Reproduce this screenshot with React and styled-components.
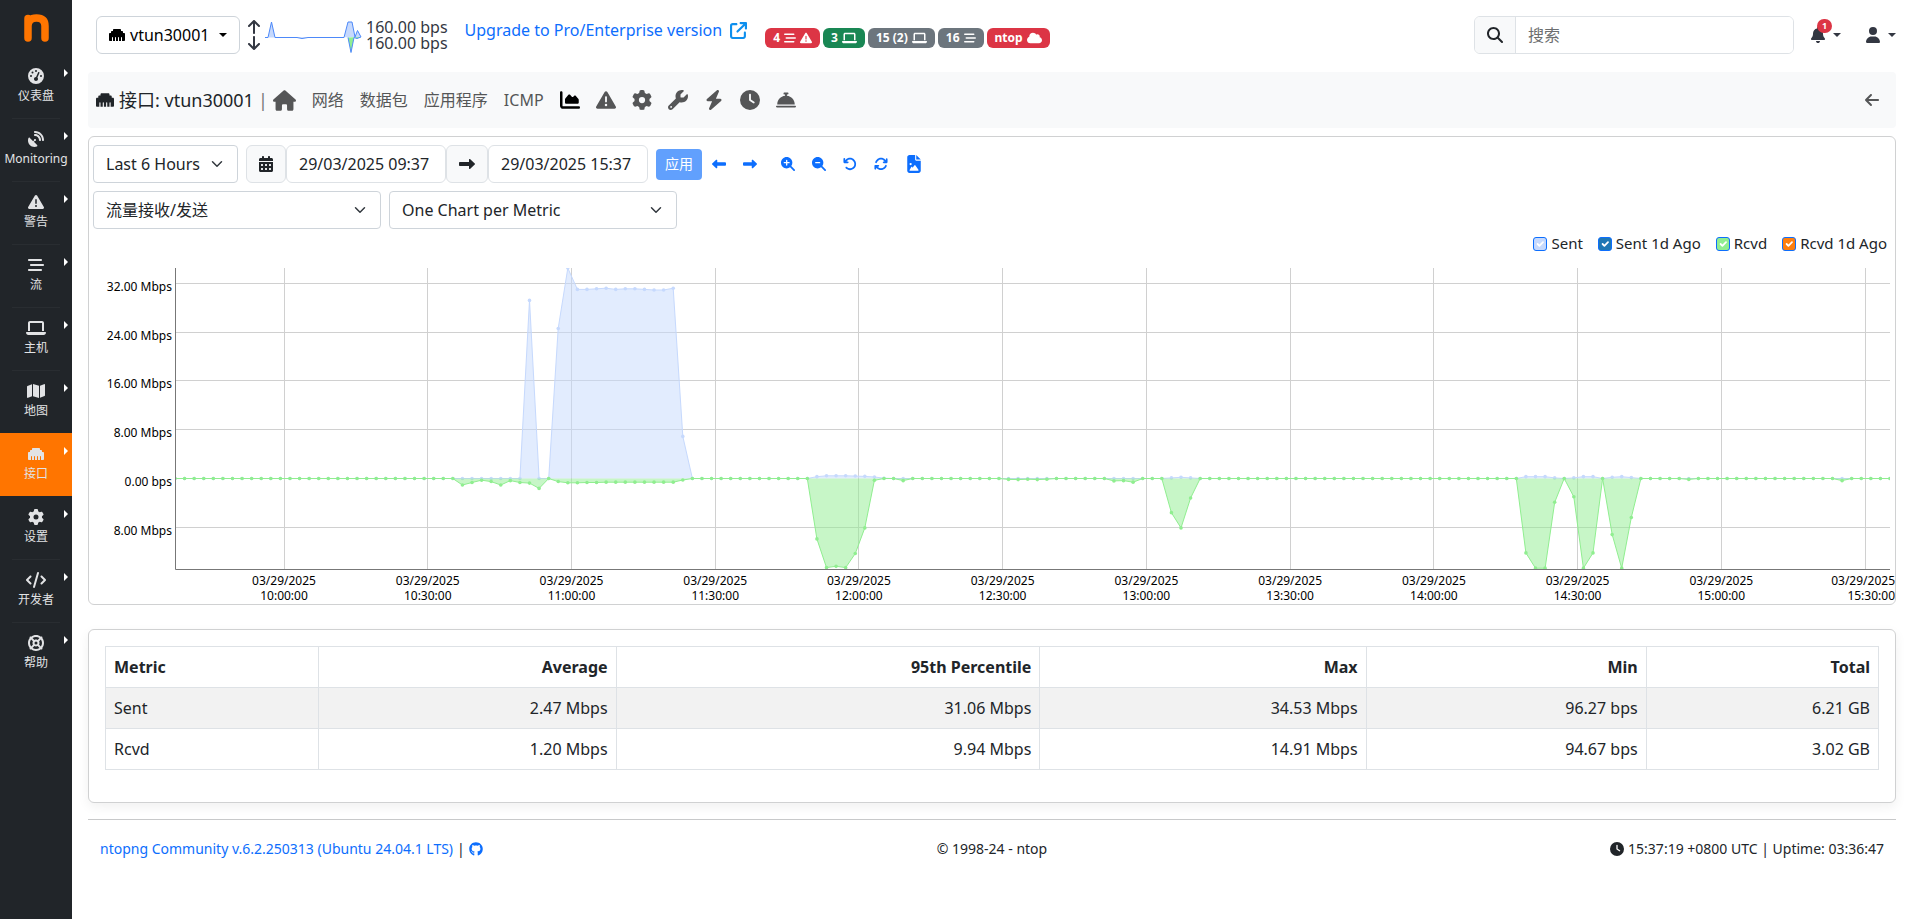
import React, { Fragment } from 'react';
import styled, { createGlobalStyle, css } from 'styled-components';
import {
  FaArrowDown,
  FaArrowLeft,
  FaArrowRotateLeft,
  FaArrowsRotate,
  FaArrowUp,
  FaArrowUpRightFromSquare,
  FaBarsStaggered,
  FaBell,
  FaBellConcierge,
  FaBolt,
  FaCalendarDays,
  FaChartArea,
  FaClock,
  FaCloud,
  FaCode,
  FaEthernet,
  FaFileImage,
  FaGaugeHigh,
  FaGear,
  FaGithub,
  FaHouse,
  FaLaptop,
  FaLeftLong,
  FaLifeRing,
  FaMagnifyingGlass,
  FaMagnifyingGlassMinus,
  FaMagnifyingGlassPlus,
  FaMap,
  FaRightLong,
  FaSatelliteDish,
  FaTriangleExclamation,
  FaUser,
  FaWrench
} from 'react-icons/fa6';

const colors = {
  primary: '#0d6efd',
  danger: '#dc3545',
  success: '#198754',
  secondary: '#6c757d',
  dark: '#212529',
  light: '#f8f9fa',
  border: '#dee2e6',
  orange: '#ff7500',
  sent: '#c6d9fd',
  rcvd: '#90ee90'
};

const GlobalStyle = createGlobalStyle`
  *, *::before, *::after {
    box-sizing: border-box;
  }
  body {
    margin: 0;
    background: white;
    color: ${colors.dark};
    font-family: 'Noto Sans', 'Noto Sans CJK SC', sans-serif;
    font-size: 16px;
    line-height: 24px;
  }
  a {
    color: ${colors.primary};
    text-decoration: none;
  }
  button, input, select {
    font: inherit;
    color: inherit;
  }
  svg {
    flex: none;
  }
`;

const Layout = styled.div`
  display: flex;
  min-height: 100vh;
`;

/* sidebar */

const Sidebar = styled.nav`
  flex: none;
  width: 72px;
  background: ${colors.dark};
`;

const Logo = styled.a`
  display: flex;
  justify-content: center;
  height: 55px;
  padding-top: 14px;
`;

const Menu = styled.ul`
  margin: 0;
  padding: 0;
  list-style: none;
`;

const MenuItem = styled.li`
  position: relative;
  height: 63px;
  background: ${props => (props.$active ? colors.orange : 'transparent')};

  & + &::before {
    content: '';
    position: absolute;
    top: 0;
    left: 12px;
    right: 12px;
    border-top: 1px solid rgba(255, 255, 255, 0.04);
  }
  &::after {
    content: '';
    position: absolute;
    top: 14px;
    right: 4px;
    border: 4px solid transparent;
    border-left-color: white;
    border-right: 0;
  }
`;

const MenuLink = styled.a`
  display: flex;
  flex-direction: column;
  align-items: center;
  gap: 4px;
  padding-top: 13px;
  color: #e2e3e5;
  font-size: 12px;
  line-height: 16px;
  white-space: nowrap;

  svg {
    height: 16px;
  }
`;

/* top bar */

const Main = styled.div`
  flex: 1;
  min-width: 0;
  padding: 0 24px 0 16px;
`;

const TopBar = styled.header`
  display: flex;
  align-items: flex-start;
  height: 72px;
  padding: 16px 0 0 8px;
`;

const Caret = styled.span`
  border: 4px solid transparent;
  border-top-color: currentColor;
  border-bottom: 0;
`;

const InterfaceButton = styled.button`
  display: flex;
  align-items: center;
  gap: 5px;
  height: 38px;
  width: 144px;
  padding: 0 12px;
  color: black;
  background: white;
  border: 1px solid #ced4da;
  border-radius: 6px;

  ${Caret} {
    margin-left: auto;
  }
`;

const Traffic = styled.div`
  display: flex;
  align-items: center;
  height: 38px;
  margin-left: 6px;
  color: #333742;
`;

const Directions = styled.div`
  display: flex;
  flex-direction: column;
  width: 17px;
  margin-right: 2px;
`;

const Rates = styled.div`
  margin: 0 17px 0 4px;
  line-height: 16px;
`;

const UpgradeLink = styled.a`
  display: flex;
  align-items: center;
  gap: 8px;
  height: 28px;
`;

const Badges = styled.div`
  display: flex;
  gap: 3px;
  margin: 12px 0 0 18px;
`;

const Badge = styled.a`
  display: flex;
  align-items: center;
  gap: 4px;
  height: 20px;
  padding: 0 8px;
  border-radius: 6px;
  background: ${props => colors[props.$tone]};
  color: white;
  font-size: 12px;
  font-weight: 700;

  svg {
    height: 12px;
  }
`;

const SearchGroup = styled.div`
  display: flex;
  width: 320px;
  height: 38px;
  margin-left: auto;
  border: 1px solid ${colors.border};
  border-radius: 6px;
  overflow: hidden;
`;

const SearchIcon = styled.label`
  display: flex;
  align-items: center;
  justify-content: center;
  width: 41px;
  background: ${colors.light};
  border-right: 1px solid ${colors.border};
`;

const SearchInput = styled.input`
  flex: 1;
  min-width: 0;
  padding: 0 12px;
  border: 0;

  &::placeholder {
    color: #6c6e70;
  }
`;

const IconMenu = styled.button`
  position: relative;
  display: flex;
  align-items: center;
  justify-content: space-between;
  width: 31px;
  height: 38px;
  margin-left: ${props => props.$gap}px;
  padding: 0;
  border: 0;
  background: none;
  color: #333742;
`;

const Counter = styled.span`
  position: absolute;
  top: 3px;
  left: 7px;
  width: 15px;
  height: 14px;
  border-radius: 7px;
  background: ${colors.danger};
  color: white;
  font-size: 9px;
  font-weight: 700;
  line-height: 14px;
  text-align: center;
`;

/* page navigation */

const PageNav = styled.nav`
  display: flex;
  align-items: center;
  height: 56px;
  padding: 0 16px 0 8px;
  border-radius: 4px;
  background: ${colors.light};
`;

const PageTitle = styled.h1`
  display: flex;
  align-items: center;
  gap: 5px;
  margin: 0;
  font-size: 18px;
  font-weight: 400;
`;

const Separator = styled.span`
  margin: 0 5px 0 4px;
  color: #777;
  font-size: 18px;
`;

const PageLinks = styled.div`
  display: flex;
  align-items: center;
  gap: 16px;
  margin-right: 16px;
`;

const PageLink = styled.a`
  display: flex;
  color: ${props => (props.$active ? 'black' : '#555657')};
`;

const BackLink = styled(PageLink)`
  margin-left: auto;
`;

/* cards */

const Card = styled.section`
  border: 1px solid #d0d1d2;
  border-radius: 6px;
  background: white;
`;

const ChartCard = styled(Card)`
  margin-top: 8px;
  padding-top: 8px;
`;

const TableCard = styled(Card)`
  margin-top: 24px;
  padding: 16px 16px 32px;
  box-shadow: 0 4px 12px rgba(0, 0, 0, 0.06);
`;

const Toolbar = styled.div`
  display: flex;
  align-items: center;
  gap: 8px;
  margin: 0 4px;

  & + & {
    margin-top: 8px;
  }
`;

const chevron = css`
  appearance: none;
  background: white
    url("data:image/svg+xml,%3csvg xmlns='http://www.w3.org/2000/svg' viewBox='0 0 16 16'%3e%3cpath fill='none' stroke='%23343a40' stroke-linecap='round' stroke-linejoin='round' stroke-width='2' d='m2 5 6 6 6-6'/%3e%3c/svg%3e")
    no-repeat right 14px center / 12px 12px;
`;

const Select = styled.select`
  ${chevron}
  width: ${props => props.$width}px;
  height: 38px;
  padding: 0 32px 0 12px;
  border: 1px solid #ced4da;
  border-radius: 4px;
`;

const DateRange = styled.div`
  display: flex;
`;

const addon = css`
  height: 38px;
  border: 1px solid ${colors.border};
  border-radius: 6px;
`;

const DateAddon = styled.span`
  ${addon}
  display: flex;
  align-items: center;
  justify-content: center;
  width: ${props => props.$width}px;
  background: ${colors.light};
`;

const DateInput = styled.input`
  ${addon}
  width: 160px;
  padding: 0 12px;
`;

const ApplyButton = styled.button`
  width: 46px;
  height: 31px;
  padding: 0;
  border: 0;
  border-radius: 4px;
  background: ${colors.primary};
  color: white;
  font-size: 14px;
  opacity: 0.65;
`;

const Tools = styled.div`
  display: flex;
  align-items: center;
  gap: 17px;
  margin-left: ${props => props.$gap}px;
`;

const ToolButton = styled.button`
  display: flex;
  padding: 0;
  border: 0;
  background: none;
  color: ${colors.primary};
`;

const Legend = styled.div`
  display: flex;
  align-items: flex-start;
  justify-content: flex-end;
  gap: 15px;
  height: 28px;
  margin-top: 2px;
  padding-right: 8px;
  font-size: 15px;
`;

const LegendItem = styled.label`
  display: flex;
  align-items: center;
  gap: 4px;
`;

const LegendCheck = styled.input`
  appearance: none;
  width: 14px;
  height: 14px;
  margin: 2px 0 0;
  border: 1px solid ${colors.primary};
  border-radius: 3px;
  background: ${props => props.$color}
    url("data:image/svg+xml,%3csvg xmlns='http://www.w3.org/2000/svg' viewBox='0 0 20 20'%3e%3cpath fill='none' stroke='white' stroke-linecap='round' stroke-linejoin='round' stroke-width='3' d='m6 10 3 3 6-6'/%3e%3c/svg%3e")
    center / contain;
`;

const ChartSvg = styled.svg`
  display: block;
  width: 100%;
  height: auto;
  font-size: 12px;
`;

const Table = styled.table`
  width: 100%;
  table-layout: fixed;
  border-collapse: collapse;
`;

const Row = styled.tr`
  background: ${props => (props.$striped ? '#f2f2f2' : 'white')};
`;

const Cell = styled.td`
  padding: 8px;
  border: 1px solid ${colors.border};
  text-align: right;

  &:first-child {
    text-align: left;
  }
`;

const HeadCell = styled(Cell)`
  width: ${props => props.$width};
  font-weight: 700;
`;

const Footer = styled.footer`
  display: grid;
  grid-template-columns: 1fr auto 1fr;
  margin-top: 16px;
  padding: 17px 12px;
  border-top: 1px solid #c8c9ca;
  font-size: 14px;
`;

const FooterPart = styled.div`
  display: flex;
  align-items: center;
  justify-content: ${props => props.$justify || 'flex-start'};
  gap: 4px;

  a {
    display: flex;
  }
`;

const menu = [
  { label: '仪表盘', icon: FaGaugeHigh },
  { label: 'Monitoring', icon: FaSatelliteDish },
  { label: '警告', icon: FaTriangleExclamation },
  { label: '流', icon: FaBarsStaggered },
  { label: '主机', icon: FaLaptop, size: 20 },
  { label: '地图', icon: FaMap, size: 18 },
  { label: '接口', icon: FaEthernet, active: true },
  { label: '设置', icon: FaGear },
  { label: '开发者', icon: FaCode, size: 20 },
  { label: '帮助', icon: FaLifeRing }
];

const badges = [
  { text: '4', tone: 'danger', icons: [FaBarsStaggered, FaTriangleExclamation], size: 12 },
  { text: '3', tone: 'success', icons: [FaLaptop], size: 15 },
  { text: '15 (2)', tone: 'secondary', icons: [FaLaptop], size: 15 },
  { text: '16', tone: 'secondary', icons: [FaBarsStaggered], size: 12 },
  { text: 'ntop', tone: 'danger', icons: [FaCloud], size: 15 }
];

const textPages = ['网络', '数据包', '应用程序', 'ICMP'];

const iconPages = [
  { name: 'Charts', icon: FaChartArea, active: true },
  { name: 'Alerts', icon: FaTriangleExclamation },
  { name: 'Settings', icon: FaGear },
  { name: 'Tools', icon: FaWrench },
  { name: 'Live', icon: FaBolt },
  { name: 'History', icon: FaClock },
  { name: 'Services', icon: FaBellConcierge }
];

const chartTools = [
  { name: 'Zoom in', icon: FaMagnifyingGlassPlus },
  { name: 'Zoom out', icon: FaMagnifyingGlassMinus },
  { name: 'Undo', icon: FaArrowRotateLeft },
  { name: 'Refresh', icon: FaArrowsRotate },
  { name: 'Save image', icon: FaFileImage, size: 18 }
];

const legend = [
  { label: 'Sent', color: colors.sent },
  { label: 'Sent 1d Ago', color: '#1f77b4' },
  { label: 'Rcvd', color: colors.rcvd },
  { label: 'Rcvd 1d Ago', color: '#ff7f0e' }
];

const columns = [
  { title: 'Metric', width: '12%' },
  { title: 'Average', width: '16.8%' },
  { title: '95th Percentile', width: '23.9%' },
  { title: 'Max', width: '18.4%' },
  { title: 'Min', width: '15.8%' },
  { title: 'Total', width: '13.1%' }
];

const rows = [
  ['Sent', '2.47 Mbps', '31.06 Mbps', '34.53 Mbps', '96.27 bps', '6.21 GB'],
  ['Rcvd', '1.20 Mbps', '9.94 Mbps', '14.91 Mbps', '94.67 bps', '3.02 GB']
];

// Traffic in Mbps, one sample every two minutes. Runs are keyed by their first sample.
const SAMPLES = 180;

const sentRuns = {
  37: [29.2],
  40: [24.6, 34.5, 31, 31, 31.1, 31.2, 31, 31.1, 31.1, 31, 30.9, 30.9, 31.2, 6.9],
  67: [0.3, 0.45, 0.45, 0.45, 0.4, 0.35, 0.25, 0.05],
  104: [0.1, 0.2, 0.1],
  141: [0.3, 0.3, 0.3, 0.1],
  146: [0.1, 0.3, 0.3, 0, 0.2, 0.3, 0.15]
};

const rcvdRuns = {
  30: [1.07, 0.65, 0.28, 0.5, 1.07, 0.35, 0.65, 0.75, 1.62],
  40: [0.5, 0.7, 0.7, 0.65, 0.65, 0.6, 0.6, 0.6, 0.6, 0.6, 0.6, 0.6, 0.6, 0.25],
  67: [9.9, 14.6, 14.4, 14.6, 12.3, 8.1, 0.3],
  76: [0.35],
  87: [0.15, 0.18, 0.12, 0.18, 0.12],
  98: [0.4, 0.35, 0.6],
  104: [5.6, 8.1, 3.2],
  141: [12.2, 14.7, 14.7, 3.9],
  146: [3, 14.7, 12.2],
  150: [9.2, 14.7, 6.4],
  158: [0.15],
  174: [0.35]
};

const expand = runs => {
  const values = new Array(SAMPLES).fill(0);
  Object.entries(runs).forEach(([start, run]) => {
    run.forEach((value, i) => {
      values[Number(start) + i] = value;
    });
  });
  return values;
};

const plot = { width: 1806, height: 345, left: 86, right: 1801, top: 9, bottom: 310, zero: 219 };
const PX_PER_MBPS = 6.1;
const xOf = i => plot.left + (i * (plot.right - plot.left)) / (SAMPLES - 1);

const yTicks = [32, 24, 16, 8, 0, -8];
const xTicks = Array.from({ length: 12 }, (_, i) => {
  const minutes = 600 + i * 30;
  const hour = Math.floor(minutes / 60);
  return { x: 195 + i * 143.73, time: `${hour}:${minutes % 60 ? '30' : '00'}:00` };
});

const Series = ({ runs, color, sign }) => {
  const points = expand(runs).map((value, i) => [
    xOf(i),
    plot.zero + 0.5 - sign * value * PX_PER_MBPS
  ]);
  const line = points.map(([x, y]) => `${x.toFixed(1)},${y.toFixed(1)}`).join(' ');
  return (
    <g>
      <polygon
        points={`${plot.left},${plot.zero + 0.5} ${line} ${plot.right},${plot.zero + 0.5}`}
        fill={color}
        fillOpacity="0.5"
      />
      <polyline points={line} fill="none" stroke={color} />
      {points.map(([x, y], i) => (
        <circle key={i} cx={x} cy={y} r="1.8" fill={color} />
      ))}
    </g>
  );
};

const TrafficChart = () => (
  <ChartSvg viewBox={`0 0 ${plot.width} ${plot.height}`} role="img" aria-label="Traffic">
    <clipPath id="plot-area">
      <rect
        x={plot.left}
        y={plot.top}
        width={plot.right - plot.left}
        height={plot.bottom - plot.top}
      />
    </clipPath>
    {yTicks.map(tick => {
      const y = Math.floor(plot.zero + 0.4 - tick * PX_PER_MBPS);
      return (
        <Fragment key={tick}>
          {tick !== 0 && (
            <line x1={plot.left} x2={plot.right} y1={y + 0.5} y2={y + 0.5} stroke="#d0d0d0" />
          )}
          <text x={plot.left - 3} y={y + 8} textAnchor="end">
            {tick === 0 ? '0.00 bps' : `${Math.abs(tick)}.00 Mbps`}
          </text>
        </Fragment>
      );
    })}
    {xTicks.map(({ x, time }, i) => {
      const last = i === xTicks.length - 1;
      const anchor = { x: last ? plot.width : x, textAnchor: last ? 'end' : 'middle' };
      return (
        <Fragment key={time}>
          <line
            x1={Math.floor(x) + 0.5}
            x2={Math.floor(x) + 0.5}
            y1={plot.top}
            y2={plot.bottom}
            stroke="#d0d0d0"
          />
          <text {...anchor} y={plot.bottom + 16}>
            03/29/2025
          </text>
          <text {...anchor} y={plot.bottom + 31}>
            {time}
          </text>
        </Fragment>
      );
    })}
    <g clipPath="url(#plot-area)">
      <Series runs={sentRuns} color={colors.sent} sign={1} />
      <Series runs={rcvdRuns} color={colors.rcvd} sign={-1} />
    </g>
    <path
      d={`M${plot.left + 0.5} ${plot.top}V${plot.bottom + 0.5}H${plot.right}`}
      fill="none"
      stroke="#777"
    />
  </ChartSvg>
);

const Sparkline = () => (
  <svg width="97" height="36" viewBox="0 0 97 36" aria-hidden="true">
    <g stroke="#4d89f9" strokeLinejoin="round">
      <path
        d="M0 20.500H3L6.500 5L10 20.500H32L37 21.500L43 20.500H79L83 5H87L90 20L92.500 13.500L96 20"
        fill={colors.sent}
      />
      <path d="M83 20.500L86 35.500L89 20.500L92 21.500L96 20" fill={colors.rcvd} />
    </g>
  </svg>
);

const LogoMark = () => (
  <svg width="25" height="28" viewBox="0 0 25 28" aria-hidden="true">
    <path
      d="M4 4.500V24M4 12C4 6.500 7 4 12.500 4S21 6.500 21 12V24"
      fill="none"
      stroke={colors.orange}
      strokeWidth="7.500"
      strokeLinecap="round"
    />
  </svg>
);

const SideMenu = () => (
  <Sidebar>
    <Logo href="#" aria-label="ntopng">
      <LogoMark />
    </Logo>
    <Menu>
      {menu.map(({ label, icon: Icon, active, size = 16 }) => (
        <MenuItem key={label} $active={active}>
          <MenuLink href="#">
            <Icon size={size} />
            {label}
          </MenuLink>
        </MenuItem>
      ))}
    </Menu>
  </Sidebar>
);

const Header = () => (
  <TopBar>
    <InterfaceButton type="button">
      <FaEthernet size={16} />
      vtun30001
      <Caret />
    </InterfaceButton>
    <Traffic>
      <Directions>
        <FaArrowUp size={16} />
        <FaArrowDown size={16} />
      </Directions>
      <Sparkline />
      <Rates>
        <div>160.00 bps</div>
        <div>160.00 bps</div>
      </Rates>
    </Traffic>
    <UpgradeLink href="#">
      Upgrade to Pro/Enterprise version
      <FaArrowUpRightFromSquare size={17} color="#0d8fee" />
    </UpgradeLink>
    <Badges>
      {badges.map(({ text, tone, icons, size }) => (
        <Badge key={text} href="#" $tone={tone}>
          {text}
          {icons.map((Icon, i) => (
            <Icon key={i} size={size} />
          ))}
        </Badge>
      ))}
    </Badges>
    <SearchGroup>
      <SearchIcon htmlFor="search" aria-label="搜索">
        <FaMagnifyingGlass size={16} />
      </SearchIcon>
      <SearchInput id="search" placeholder="搜索" />
    </SearchGroup>
    <IconMenu type="button" aria-label="Notifications" $gap={16}>
      <FaBell size={16} />
      <Counter>1</Counter>
      <Caret />
    </IconMenu>
    <IconMenu type="button" aria-label="User" $gap={24}>
      <FaUser size={16} />
      <Caret />
    </IconMenu>
  </TopBar>
);

const PageNavigation = () => (
  <PageNav>
    <PageTitle>
      <FaEthernet size={18} />
      接口: vtun30001
    </PageTitle>
    <Separator>|</Separator>
    <PageLinks>
      <PageLink href="#" aria-label="Home">
        <FaHouse size={23} />
      </PageLink>
      {textPages.map(name => (
        <PageLink key={name} href="#">
          {name}
        </PageLink>
      ))}
    </PageLinks>
    <PageLinks>
      {iconPages.map(({ name, icon: Icon, active }) => (
        <PageLink key={name} href="#" aria-label={name} $active={active}>
          <Icon size={20} />
        </PageLink>
      ))}
    </PageLinks>
    <BackLink href="#" aria-label="Back">
      <FaArrowLeft size={16} />
    </BackLink>
  </PageNav>
);

const App = () => (
  <Layout>
    <GlobalStyle />
    <SideMenu />
    <Main>
      <Header />
      <PageNavigation />

      <ChartCard>
        <Toolbar>
          <Select $width={145} aria-label="Time range">
            <option>Last 6 Hours</option>
          </Select>
          <DateRange>
            <DateAddon $width={40}>
              <FaCalendarDays size={16} />
            </DateAddon>
            <DateInput aria-label="From" defaultValue="29/03/2025 09:37" />
            <DateAddon $width={42}>
              <FaRightLong size={16} />
            </DateAddon>
            <DateInput aria-label="To" defaultValue="29/03/2025 15:37" />
          </DateRange>
          <ApplyButton type="button">应用</ApplyButton>
          <Tools $gap={2}>
            <ToolButton type="button" aria-label="Back in time">
              <FaLeftLong size={14} />
            </ToolButton>
            <ToolButton type="button" aria-label="Forward in time">
              <FaRightLong size={14} />
            </ToolButton>
          </Tools>
          <Tools $gap={16}>
            {chartTools.map(({ name, icon: Icon, size = 14 }) => (
              <ToolButton key={name} type="button" aria-label={name}>
                <Icon size={size} />
              </ToolButton>
            ))}
          </Tools>
        </Toolbar>
        <Toolbar>
          <Select $width={288} aria-label="Metric">
            <option>流量接收/发送</option>
          </Select>
          <Select $width={288} aria-label="Chart layout">
            <option>One Chart per Metric</option>
          </Select>
        </Toolbar>
        <Legend>
          {legend.map(({ label, color }) => (
            <LegendItem key={label}>
              <LegendCheck type="checkbox" defaultChecked $color={color} />
              {label}
            </LegendItem>
          ))}
        </Legend>
        <TrafficChart />
      </ChartCard>

      <TableCard>
        <Table>
          <thead>
            <Row>
              {columns.map(({ title, width }) => (
                <HeadCell key={title} as="th" $width={width}>
                  {title}
                </HeadCell>
              ))}
            </Row>
          </thead>
          <tbody>
            {rows.map((row, i) => (
              <Row key={row[0]} $striped={i % 2 === 0}>
                {row.map((value, j) => (
                  <Cell key={j}>{value}</Cell>
                ))}
              </Row>
            ))}
          </tbody>
        </Table>
      </TableCard>

      <Footer>
        <FooterPart>
          <a href="#">ntopng Community v.6.2.250313 (Ubuntu 24.04.1 LTS)</a>|
          <a href="#" aria-label="GitHub">
            <FaGithub size={14} />
          </a>
        </FooterPart>
        <FooterPart>© 1998-24 - ntop</FooterPart>
        <FooterPart $justify="flex-end">
          <FaClock size={14} />
          15:37:19 +0800 UTC | Uptime: 03:36:47
        </FooterPart>
      </Footer>
    </Main>
  </Layout>
);

export default App;
